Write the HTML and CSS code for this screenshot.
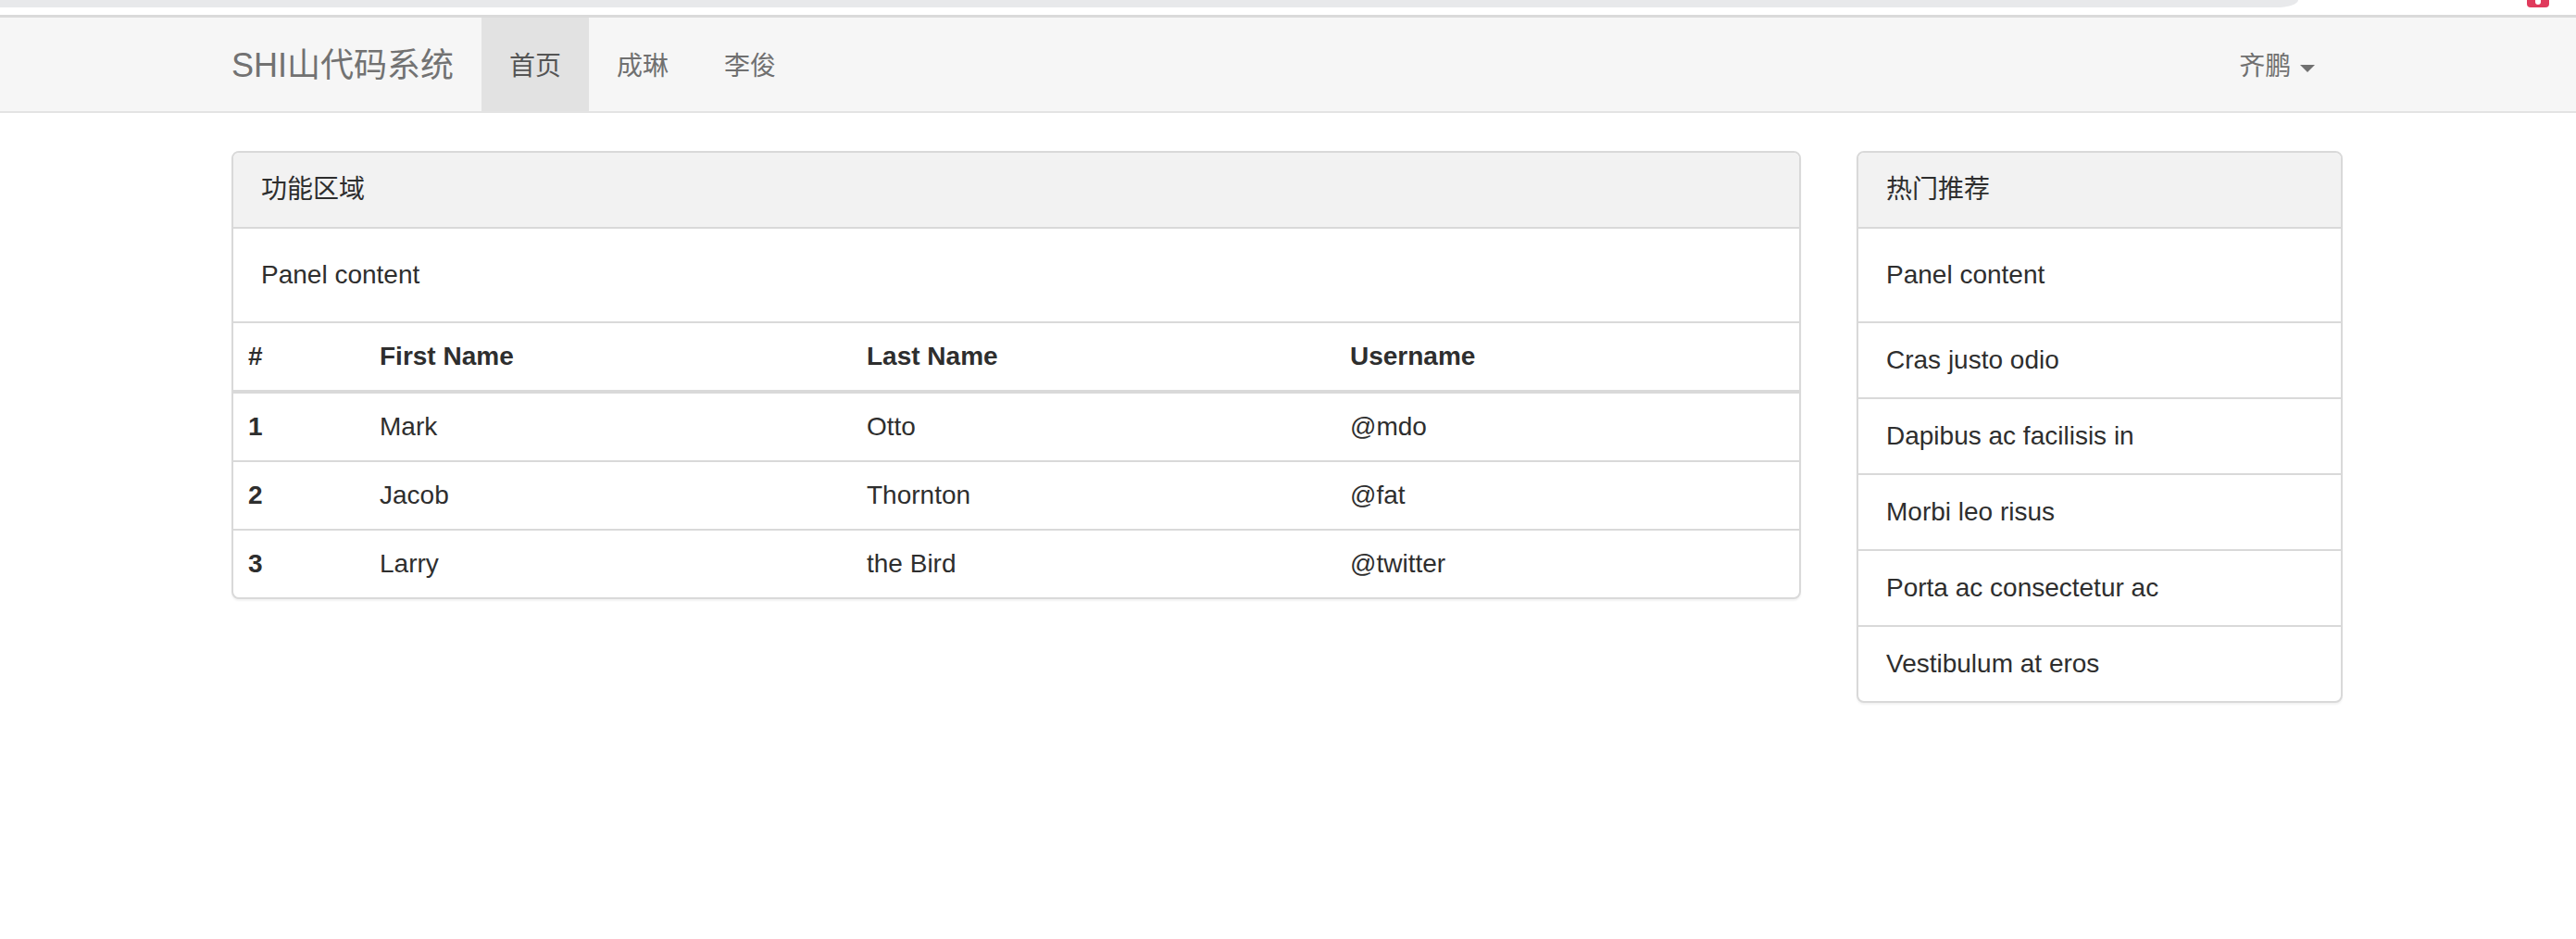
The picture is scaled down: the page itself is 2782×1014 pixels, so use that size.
FILE: index.html
```html
<!DOCTYPE html>
<html lang="zh-CN">
<head>
<meta charset="utf-8">
<title>SHI山代码系统</title>
<link rel="stylesheet" href="styles.css">
</head>
<body>
<div class="chrome">
  <div class="chrome-bar"></div>
  <div class="chrome-icon"><span class="chrome-dot"></span></div>
</div>
<nav class="navbar">
  <div class="nav-container">
    <a class="brand" href="#">SHI山代码系统</a>
    <ul class="nav">
      <li><a class="active" href="#">首页</a></li>
      <li><a href="#">成琳</a></li>
      <li><a href="#">李俊</a></li>
    </ul>
    <ul class="nav nav-right">
      <li><a href="#">齐鹏 <span class="caret"></span></a></li>
    </ul>
  </div>
</nav>
<div class="container">
  <div class="row">
    <div class="col-main">
      <div class="panel">
        <div class="panel-heading">功能区域</div>
        <div class="panel-body">Panel content</div>
        <table class="table">
          <thead>
            <tr><th class="c1">#</th><th class="c2">First Name</th><th class="c3">Last Name</th><th>Username</th></tr>
          </thead>
          <tbody>
            <tr><th>1</th><td>Mark</td><td>Otto</td><td>@mdo</td></tr>
            <tr><th>2</th><td>Jacob</td><td>Thornton</td><td>@fat</td></tr>
            <tr><th>3</th><td>Larry</td><td>the Bird</td><td>@twitter</td></tr>
          </tbody>
        </table>
      </div>
    </div>
    <div class="col-side">
      <div class="panel">
        <div class="panel-heading">热门推荐</div>
        <div class="panel-body">Panel content</div>
        <ul class="list-group">
          <li class="list-item">Cras justo odio</li>
          <li class="list-item">Dapibus ac facilisis in</li>
          <li class="list-item">Morbi leo risus</li>
          <li class="list-item">Porta ac consectetur ac</li>
          <li class="list-item">Vestibulum at eros</li>
        </ul>
      </div>
    </div>
  </div>
</div>
</body>
</html>
```
FILE: styles.css
```css
* { box-sizing: border-box; }
html, body { margin: 0; padding: 0; background: #fff; }
body {
  font-family: "Liberation Sans", Arial, "Noto Sans CJK SC", sans-serif;
  font-size: 28px;
  line-height: 40px;
  color: #2e2e2e;
}
a { text-decoration: none; }

.chrome { height: 16px; display: flex; align-items: flex-start; }
.chrome-bar {
  width: 2482px; height: 8px; background: #e8e9eb;
  border-bottom-right-radius: 24px 8px;
}
.chrome-icon {
  margin-left: 247px; width: 24px; height: 8px; background: #e03a5c;
  border-radius: 0 0 4px 4px; display: flex; justify-content: center;
}
.chrome-dot { width: 6px; height: 5px; background: #fff; border-radius: 0 0 3px 3px; }

.navbar {
  background: #f6f6f6;
  border-top: 3px solid #dadada;
  border-bottom: 2px solid #e3e3e3;
  margin-bottom: 41px;
}
.nav-container {
  width: 2340px; margin: 0 0 0 calc(50% - 1171px); padding: 0 30px;
  display: flex; height: 101px;
}
.brand {
  display: block; margin-left: -30px; padding: 32px 30px 29px;
  font-size: 36px; line-height: 40px; color: #727272; height: 101px;
}
.nav { list-style: none; margin: 0; padding: 0; display: flex; }
.nav a { display: block; padding: 32px 30px 28px; height: 101px; color: #707070; font-size: 28px; line-height: 41px; }
.nav a.active { background: #e2e2e2; color: #555; }
.nav-right { margin-left: auto; margin-right: 0; }
.caret {
  display: inline-block; width: 0; height: 0; margin-left: 2px; vertical-align: middle;
  border-top: 8px solid #707070; border-left: 8px solid transparent; border-right: 8px solid transparent;
}

.container { width: 2340px; margin: 0 0 0 calc(50% - 1171px); padding: 0 30px; }
.row { display: flex; margin: 0 -30px; align-items: flex-start; }
.col-main { width: 75%; padding: 0 30px; }
.col-side { width: 25%; padding: 0 30px; }

.panel {
  background: #fff; border: 2px solid #d9d9d9; border-radius: 8px;
  box-shadow: 0 2px 2px rgba(0,0,0,0.05); margin-bottom: 40px; overflow: hidden;
}
.panel-heading {
  background: #f2f2f2; padding: 20px 30px; border-bottom: 2px solid #d9d9d9;
  color: #2e2e2e;
}
.panel-body { padding: 30px; }

.table { width: 100%; border-collapse: collapse; }
.table th, .table td {
  padding: 16px; text-align: left; line-height: 40px;
  border-top: 2px solid #d9d9d9; vertical-align: top;
}
.table th { font-weight: bold; }
.table thead th { border-bottom: 4px solid #d9d9d9; }
.table .c1 { width: 142px; }
.table .c2 { width: 526px; }
.table .c3 { width: 522px; }
.table tbody tr:first-child th, .table tbody tr:first-child td { border-top: 0; }

.list-group { list-style: none; margin: 0; padding: 0; }
.list-item { padding: 20px 30px; border-top: 2px solid #d9d9d9; }
```
